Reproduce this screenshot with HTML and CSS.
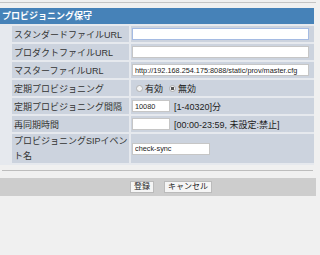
FILE: index.html
```html
<!DOCTYPE html>
<html lang="ja">
<head>
    <meta charset="UTF-8">
    <title>プロビジョニング保守</title>
    <link rel="stylesheet" href="styles.css">
</head>
<body>
    <div class="topline"></div>
    <div class="section">
        <div class="head">プロビジョニング保守</div>
        <div class="form">
            <div class="label">スタンダードファイルURL</div>
            <div class="value"><input class="text long focus" type="text" value=""></div>

            <div class="label">プロダクトファイルURL</div>
            <div class="value"><input class="text long" type="text" value=""></div>

            <div class="label">マスターファイルURL</div>
            <div class="value"><input class="text long" type="text" value="http://192.168.254.175:8088/static/prov/master.cfg"></div>

            <div class="label">定期プロビジョニング</div>
            <div class="value">
                <label class="radio"><input type="radio" name="periodic">有効</label>
                <label class="radio"><input type="radio" name="periodic" checked>無効</label>
            </div>

            <div class="label">定期プロビジョニング間隔</div>
            <div class="value"><input class="text short" type="text" value="10080"><span class="hint">[1-40320]分</span></div>

            <div class="label">再同期時間</div>
            <div class="value"><input class="text short" type="text" value=""><span class="hint">[00:00-23:59, 未設定:禁止]</span></div>

            <div class="label two">プロビジョニングSIPイベン<br>ト名</div>
            <div class="value"><input class="text mid" type="text" value="check-sync"></div>
        </div>
    </div>
    <div class="bottomline"></div>
    <div class="buttons">
        <button class="btn">登録</button>
        <button class="btn">キャンセル</button>
    </div>
</body>
</html>
```

FILE: styles.css
```css
/* ページ全体 */
body {
    margin: 0;
    background-color: #f0f0f0;
    font-family: "Liberation Sans", "Noto Sans CJK JP", sans-serif;
    font-size: 9px;
    color: #222;
}
.topline {
    width: 316px;
    height: 1px;
    margin-top: 2px;
    background-color: #c4c4c4;
}
/* セクション */
.section {
    width: 314px;
    margin-top: 5px;
}
.head {
    height: 16px;
    line-height: 16px;
    padding-left: 2px;
    background-color: #4682b8;
    color: #fff;
    font-weight: bold;
}
/* 入力表 */
.form {
    display: grid;
    grid-template-columns: 117px 1fr;
    grid-template-rows: repeat(6, 16px) 29px;
    gap: 2px;
    padding: 2px 0 2px 12px;
    background-color: #e6e9ee;
}
.label, .value {
    display: flex;
    align-items: center;
    background-color: #ccd3de;
    white-space: nowrap;
}
.label {
    padding-left: 2px;
    color: #333;
}
.label.two {
    line-height: 15px;
}
.value {
    padding-left: 1px;
}
.text {
    box-sizing: border-box;
    height: 12px;
    padding: 0 2px;
    border: 1px solid #c6c6c6;
    background-color: #fff;
    font-family: "Liberation Sans", sans-serif;
    font-size: 7.3px;
    color: #222;
    outline: none;
}
.text.focus {
    border-color: #a5bbe3;
}
.long {
    width: 177px;
}
.short {
    width: 38px;
}
.mid {
    width: 78px;
}
.hint {
    margin-left: 4px;
}
/* ラジオボタン */
.radio {
    display: flex;
    align-items: center;
    margin-left: 4px;
    margin-right: 2px;
}
.radio input {
    appearance: none;
    box-sizing: border-box;
    width: 7px;
    height: 7px;
    margin: 0 2px 0 0;
    border: 1px solid #b0b0b0;
    border-radius: 50%;
    background-color: #f4f4f4;
}
.radio input:checked {
    background: radial-gradient(circle, #555 0 1.5px, #f4f4f4 2px);
}
/* 下部ボタン */
.bottomline {
    width: 311px;
    height: 1px;
    margin: 5px 0 0 2px;
    background-color: #bdbdbd;
}
.buttons {
    display: flex;
    gap: 10px;
    width: 316px;
    height: 18px;
    margin-top: 7px;
    padding-left: 130px;
    box-sizing: border-box;
    align-items: center;
    background-color: #cdcdcd;
}
.btn {
    height: 12px;
    padding: 0 3px;
    border: 1px solid #bbb;
    background-color: #f5f5f5;
    font-family: "Liberation Sans", "Noto Sans CJK JP", sans-serif;
    font-size: 8px;
    line-height: 10px;
    color: #222;
}
```
